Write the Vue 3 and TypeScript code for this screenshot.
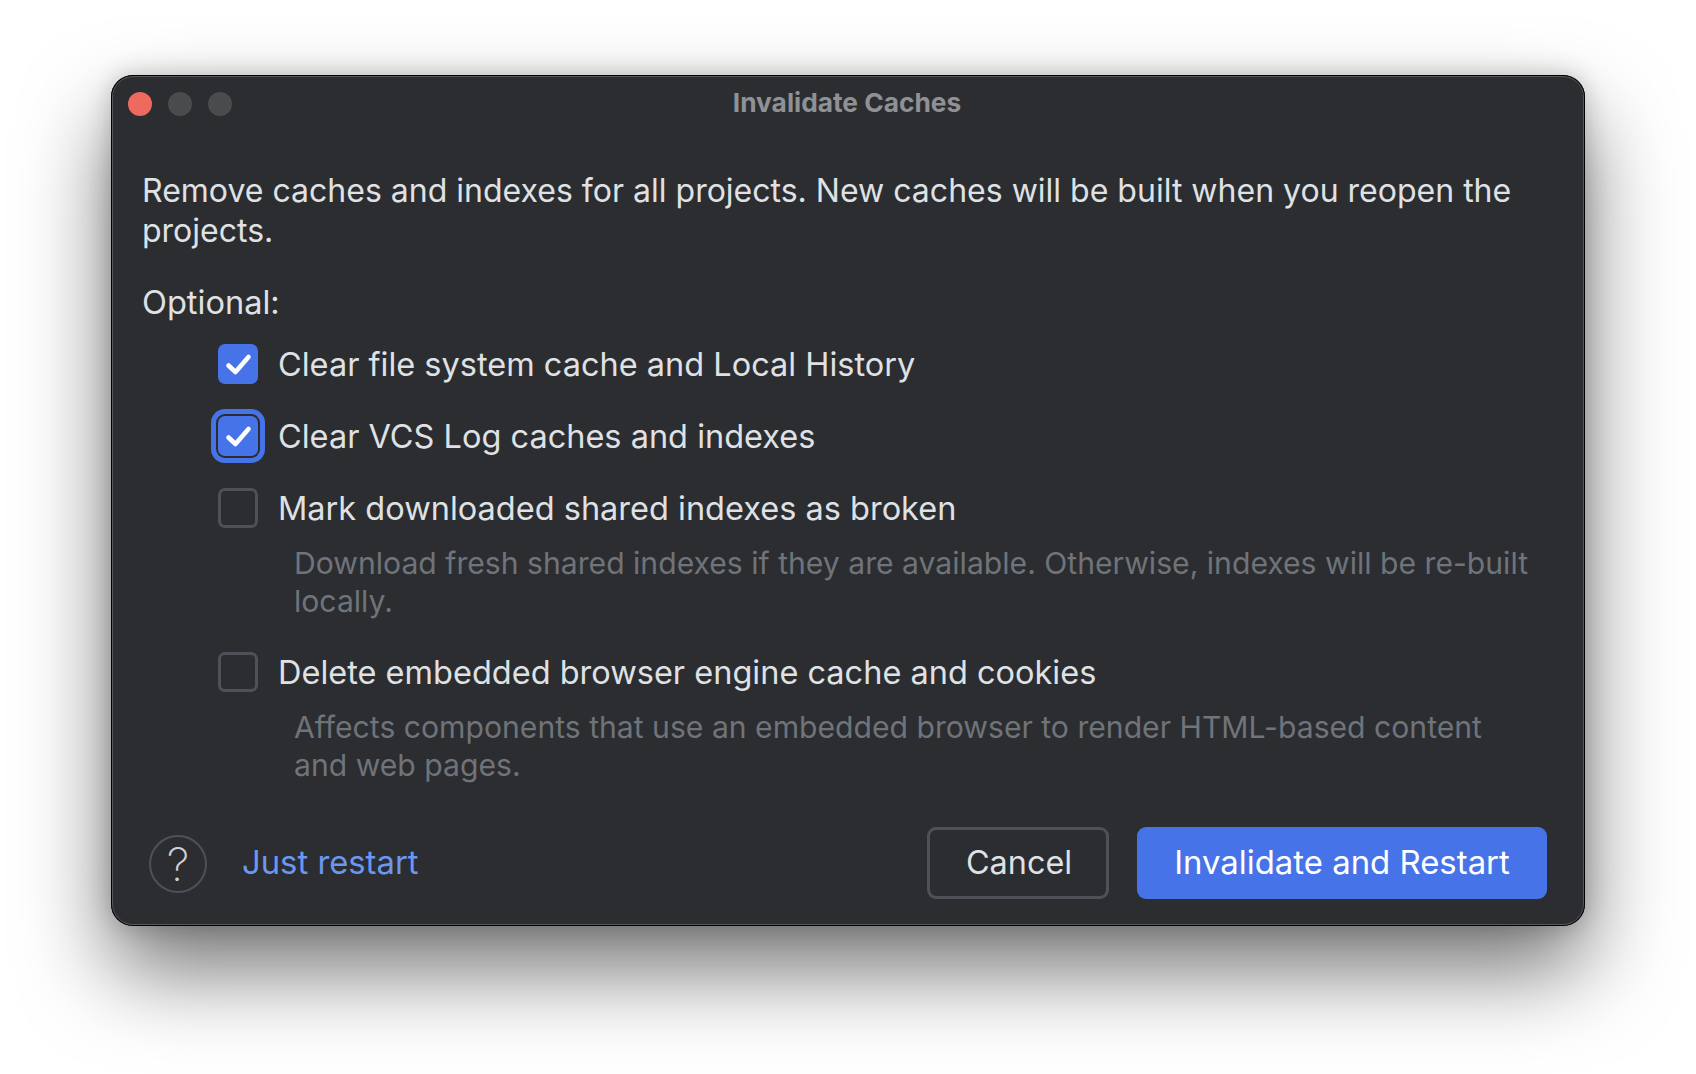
<script setup lang="ts">
interface Option {
  label: string
  checked: boolean
  focused?: boolean
  hint?: string[]
}

const options: Option[] = [
  { label: 'Clear file system cache and Local History', checked: true },
  { label: 'Clear VCS Log caches and indexes', checked: true, focused: true },
  {
    label: 'Mark downloaded shared indexes as broken',
    checked: false,
    hint: ['Download fresh shared indexes if they are available. Otherwise, indexes will be re-built', 'locally.'],
  },
  {
    label: 'Delete embedded browser engine cache and cookies',
    checked: false,
    hint: ['Affects components that use an embedded browser to render HTML-based content', 'and web pages.'],
  },
]
</script>

<template>
  <div class="page">
    <div class="window">
      <header class="titlebar">
        <div class="lights">
          <span class="light red"></span>
          <span class="light"></span>
          <span class="light"></span>
        </div>
        <div class="title">Invalidate Caches</div>
      </header>

      <main class="content">
        <p class="intro">
          Remove caches and indexes for all projects. New caches will be built when you reopen the<br />projects.
        </p>
        <div class="optional">Optional:</div>

        <div class="options">
          <div v-for="opt in options" :key="opt.label" class="option">
            <div class="row">
              <span class="box" :class="{ checked: opt.checked, focused: opt.focused }">
                <svg v-if="opt.checked" class="tick" viewBox="0 0 40 40" width="40" height="40" aria-hidden="true">
                  <path d="M10.5 21.5 L17.5 28 L30.5 13" fill="none" stroke="#fff" stroke-width="4.6" stroke-linecap="round" stroke-linejoin="round" />
                </svg>
              </span>
              <span class="label">{{ opt.label }}</span>
            </div>
            <div v-if="opt.hint" class="hint">
              <div v-for="line in opt.hint" :key="line">{{ line }}</div>
            </div>
          </div>
        </div>
      </main>

      <footer class="footer">
        <div class="help">?</div>
        <a class="link">Just restart</a>
        <div class="spacer"></div>
        <button class="btn cancel" type="button">Cancel</button>
        <button class="btn primary" type="button">Invalidate and Restart</button>
      </footer>
    </div>
  </div>
</template>

<style>
html,
body {
  margin: 0;
  background: #ffffff;
}
</style>

<style scoped>
.page {
  width: 1696px;
  height: 1074px;
  padding: 75px 0 0 111px;
  box-sizing: border-box;
  overflow: hidden;
  font-family: Inter, "Liberation Sans", sans-serif;
}
.window {
  width: 1474px;
  height: 851px;
  box-sizing: border-box;
  display: flex;
  flex-direction: column;
  background: #2b2d30;
  border-radius: 22px;
  box-shadow:
    inset 0 0 0 1px #000,
    inset 0 0 0 2px #55575a,
    0 44px 88px rgba(0, 0, 0, 0.55),
    0 0 24px rgba(0, 0, 0, 0.2);
}
.titlebar {
  height: 56px;
  flex: none;
  position: relative;
  display: flex;
  align-items: center;
  justify-content: center;
}
.lights {
  position: absolute;
  left: 17px;
  top: 17px;
  display: flex;
  gap: 16px;
}
.light {
  width: 24px;
  height: 24px;
  border-radius: 50%;
  background: #4a4b4d;
}
.light.red {
  background: #ee6a5f;
}
.title {
  font-size: 26.3px;
  font-weight: 700;
  color: #909195;
  margin: -1px 2px 0 0;
}
.content {
  flex: 1;
  padding: 40px 30px 0 31px;
  color: #dfe1e5;
}
.intro {
  margin: 0;
  font-size: 32.02px;
  line-height: 40px;
}
.optional {
  margin-top: 31px;
  font-size: 32.6px;
  line-height: 40px;
}
.options {
  margin-top: 23px;
  padding-left: 76px;
}
.option {
  margin-bottom: 32px;
}
.option:nth-child(3) {
  margin-bottom: 33px;
}
.option:last-child {
  margin-bottom: 0;
}
.row {
  display: flex;
  align-items: center;
  height: 40px;
}
.box {
  position: relative;
  width: 40px;
  height: 40px;
  flex: none;
  box-sizing: border-box;
  border: 3px solid #4e5157;
  border-radius: 7px;
  margin: 0 20px 2px 0;
}
.box.checked {
  background: #4674e8;
  border: none;
}
.box.focused {
  box-shadow: 0 0 0 2px #2b2d30, 0 0 0 7px #4674e8;
}
.tick {
  display: block;
}
.label {
  font-size: 32.5px;
  line-height: 40px;
  white-space: nowrap;
}
.hint {
  margin-top: 15px;
  margin-left: 76px;
  font-size: 30.15px;
  line-height: 38px;
  color: #6f737a;
  white-space: nowrap;
}
.footer {
  flex: none;
  height: 99px;
  display: flex;
  align-items: flex-start;
  padding: 0 38px 0 38px;
}
.help {
  width: 58px;
  height: 58px;
  margin-top: 8px;
  box-sizing: border-box;
  border: 2px solid #4e5157;
  border-radius: 50%;
  display: flex;
  align-items: center;
  justify-content: center;
  color: #d0d1d4;
  font-size: 46px;
  font-weight: 200;
}
.link {
  margin-left: 35px;
  height: 72px;
  line-height: 70px;
  font-size: 32.8px;
  color: #6b97f0;
}
.spacer {
  flex: 1;
}
.btn {
  height: 72px;
  box-sizing: border-box;
  border-radius: 9px;
  font-family: inherit;
  font-size: 32.4px;
  padding: 0 0 2px;
}
.cancel {
  width: 182px;
  background: transparent;
  border: 3px solid #4e5157;
  color: #dfe1e5;
  margin-right: 28px;
  padding-left: 2px;
}
.primary {
  width: 410px;
  background: #4674e8;
  border: none;
  color: #fff;
  font-size: 32.9px;
}
</style>
